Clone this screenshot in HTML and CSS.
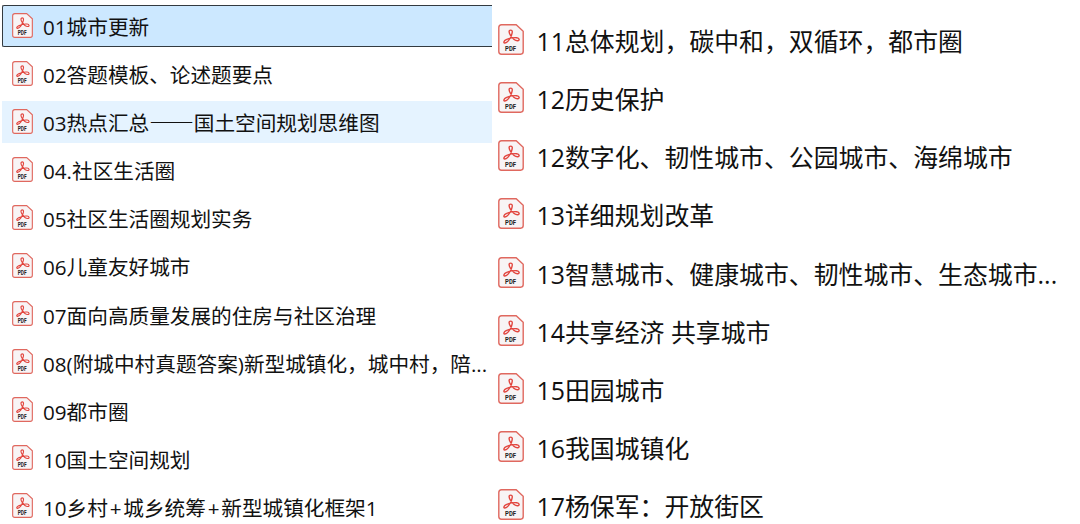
FILE: index.html
```
<!DOCTYPE html>
<html lang="zh-CN">

<head>
    <meta charset="UTF-8">
    <meta name="viewport" content="width=device-width, initial-scale=1.0">
    <title>城市规划专题</title>
    <link rel="stylesheet" href="styles.css">
</head>

<body>

    <!-- PDF file icon -->
    <svg class="sprite" width="0" height="0">
        <symbol id="pdf" viewBox="0 0 26 31">
            <path d="M3.5 .8H18.2L25.2 7.2V27.6Q25.2 30.2 22.6 30.2H3.4Q.8 30.2 .8 27.6V3.4Q.8 .8 3.5 .8Z" fill="#f8f4f5" stroke="#e0685f" stroke-width="1.4" />
            <path d="M12.8 6.1C10.4 6.1 10.8 8.8 12.5 11.4C14.4 14.3 17.2 16.8 19.6 16.7C22 16.5 21.5 14 18.7 13.7C15.4 13.4 11.2 14.3 8.2 15.7C5.8 16.9 5.2 18.8 6.7 19C9.1 19.3 12.2 14.9 13.5 11.2C14.6 8.2 14.7 6.1 12.8 6.1Z" fill="none" stroke="#e2453e" stroke-width="1.4" />
            <text x="12.6" y="27" text-anchor="middle" textLength="11" lengthAdjust="spacingAndGlyphs">PDF</text>
        </symbol>
    </svg>

    <div class="container">
        <ul class="file-list small">
            <li class="selected"><svg><use href="#pdf" /></svg><span>01城市更新</span></li>
            <li><svg><use href="#pdf" /></svg><span>02答题模板、论述题要点</span></li>
            <li class="hover"><svg><use href="#pdf" /></svg><span>03热点汇总<span class="dash">——</span>国土空间规划思维图</span></li>
            <li><svg><use href="#pdf" /></svg><span>04.社区生活圈</span></li>
            <li><svg><use href="#pdf" /></svg><span>05社区生活圈规划实务</span></li>
            <li><svg><use href="#pdf" /></svg><span>06儿童友好城市</span></li>
            <li><svg><use href="#pdf" /></svg><span>07面向高质量发展的住房与社区治理</span></li>
            <li><svg><use href="#pdf" /></svg><span>08(附城中村真题答案)新型城镇化，城中村，陪...</span></li>
            <li><svg><use href="#pdf" /></svg><span>09都市圈</span></li>
            <li><svg><use href="#pdf" /></svg><span>10国土空间规划</span></li>
            <li><svg><use href="#pdf" /></svg><span>10乡村<span class="plus">+</span>城乡统筹<span class="plus">+</span>新型城镇化框架1</span></li>
        </ul>

        <ul class="file-list large">
            <li><svg><use href="#pdf" /></svg><span>11总体规划，碳中和，双循环，都市圈</span></li>
            <li><svg><use href="#pdf" /></svg><span>12历史保护</span></li>
            <li><svg><use href="#pdf" /></svg><span>12数字化、韧性城市、公园城市、海绵城市</span></li>
            <li><svg><use href="#pdf" /></svg><span>13详细规划改革</span></li>
            <li><svg><use href="#pdf" /></svg><span>13智慧城市、健康城市、韧性城市、生态城市...</span></li>
            <li><svg><use href="#pdf" /></svg><span>14共享经济 共享城市</span></li>
            <li><svg><use href="#pdf" /></svg><span>15田园城市</span></li>
            <li><svg><use href="#pdf" /></svg><span>16我国城镇化</span></li>
            <li><svg><use href="#pdf" /></svg><span>17杨保军：开放街区</span></li>
        </ul>
    </div>

</body>

</html>
```
FILE: styles.css
```
* {
    box-sizing: border-box;
}

body {
    font-family: "Open Sans", "Noto Sans CJK SC", sans-serif;
    background-color: #fff;
    color: #111;
    margin: 0;
    overflow: hidden;
}

.sprite {
    display: block;
}

.sprite text {
    font-family: Roboto, sans-serif;
    font-size: 7.8px;
    font-weight: 700;
    fill: #222;
}

.container {
    display: flex;
    height: 524px;
}

.file-list {
    list-style: none;
    margin: 0;
    padding: 0;
    white-space: nowrap;
}

.file-list li {
    display: flex;
    align-items: center;
    border: 1px solid transparent;
}

.file-list svg {
    flex: none;
    overflow: visible;
}

.small {
    width: 492px;
    padding: 5px 0 0 2px;
    font-size: 20.65px;
}

.small li {
    height: 42px;
    margin-bottom: 6.1px;
    padding-left: 9px;
    border-right: none;
}

.small svg {
    width: 21px;
    height: 25px;
    margin: 0 10px 2px 0;
}

.small .selected {
    background-color: #cce8ff;
    border-color: #333a40;
    border-radius: 2px 0 0 2px;
}

.small .hover {
    background-color: #e5f3ff;
}

.dash {
    font-family: "Noto Sans CJK SC", sans-serif;
    font-size: 22.3px;
    line-height: 1;
}

.plus {
    padding: 0 1.8px;
}

.large {
    padding: 11px 0 0 6px;
    font-size: 24.88px;
}

.large li {
    height: 58.15px;
    border: none;
}

.large svg {
    width: 26px;
    height: 31px;
    margin: 0 12.5px 1px 0;
}
```
